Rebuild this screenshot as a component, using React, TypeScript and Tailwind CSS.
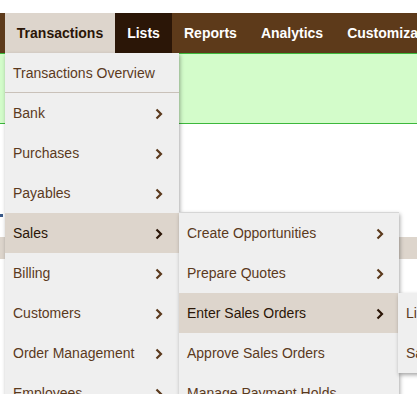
import React from "react"

const font = { fontFamily: '"Liberation Sans", Arial, sans-serif' }

function Chevron({ dark }: { dark?: boolean }) {
    return (
        <svg width="8" height="12" viewBox="0 0 8 12" className="shrink-0">
            <polyline
                points="1.5,1.5 6,6 1.5,10.5"
                fill="none"
                stroke={dark ? "#2b1607" : "#5b3a1d"}
                strokeWidth="2.2"
            />
        </svg>
    )
}

function Item({ label, arrow = true, active = false, pr = "pr-4" }: { label: string; arrow?: boolean; active?: boolean; pr?: string }) {
    return (
        <div
            className={`flex h-10 items-center justify-between pl-2 ${pr} pt-px text-[14px] whitespace-nowrap ${active ? "bg-[#ddd5cc] text-[#2b1607]" : "text-[#5b3a1d]"}`}
        >
            <span>{label}</span>
            {arrow && <Chevron dark={active} />}
        </div>
    )
}

export default function App() {
    const tabs = ["Reports", "Analytics", "Customization"]
    return (
        <div className="relative h-[394px] w-[417px] overflow-hidden bg-white" style={font}>
            <div className="h-[13px]" />
            {/* nav bar */}
            <div className="flex h-10 bg-[#5d3a1a] pl-[5px] text-[14px] font-bold whitespace-nowrap">
                <div className="flex w-[110px] shrink-0 items-center justify-center bg-[#ddd5cc] text-[#2b1607]">Transactions</div>
                <div className="flex w-[57px] shrink-0 items-center justify-center bg-[#2b1607] text-white">Lists</div>
                {tabs.map((t) => (
                    <div key={t} className="flex shrink-0 items-center px-3 text-white">
                        {t}
                    </div>
                ))}
            </div>
            {/* banner */}
            <div className="h-[71px] border-y border-[#3cb83c] bg-[#d3fcca]" />
            {/* page body */}
            <div className="relative h-[200px] pt-[113px]">
                <div className="absolute left-0 top-[90px] h-[3px] w-[3px] bg-[#3a5a8a]" />
                <div className="h-[22px] bg-[#ddd5cc]" />
            </div>

            {/* main dropdown */}
            <div className="absolute left-[5px] top-[53px] w-[174px] bg-[#efefef] shadow-[1px_2px_4px_rgba(0,0,0,0.35)]">
                <div className="flex h-[40px] items-center border-b border-[#c9c1b9] pl-2 pt-px text-[14px] text-[#5b3a1d]">
                    Transactions Overview
                </div>
                <Item label="Bank" />
                <Item label="Purchases" />
                <Item label="Payables" />
                <Item label="Sales" active />
                <Item label="Billing" />
                <Item label="Customers" />
                <Item label="Order Management" />
                <Item label="Employees" />
            </div>

            {/* sales submenu */}
            <div className="absolute left-[179px] top-[212px] w-[220px] border-t border-[#d6d6d6] bg-[#efefef] shadow-[1px_2px_4px_rgba(0,0,0,0.35)]">
                <Item label="Create Opportunities" pr="pr-[15px]" />
                <Item label="Prepare Quotes" pr="pr-[15px]" />
                <Item label="Enter Sales Orders" active pr="pr-[15px]" />
                <Item label="Approve Sales Orders" arrow={false} />
                <Item label="Manage Payment Holds" arrow={false} />
            </div>

            {/* sales orders submenu */}
            <div className="absolute left-[398px] top-[293px] w-[160px] bg-[#efefef] shadow-[1px_2px_4px_rgba(0,0,0,0.35)]">
                <Item label="List Sales Orders" arrow={false} />
                <Item label="Sales Order Fulfillment" arrow={false} />
            </div>
        </div>
    )
}
